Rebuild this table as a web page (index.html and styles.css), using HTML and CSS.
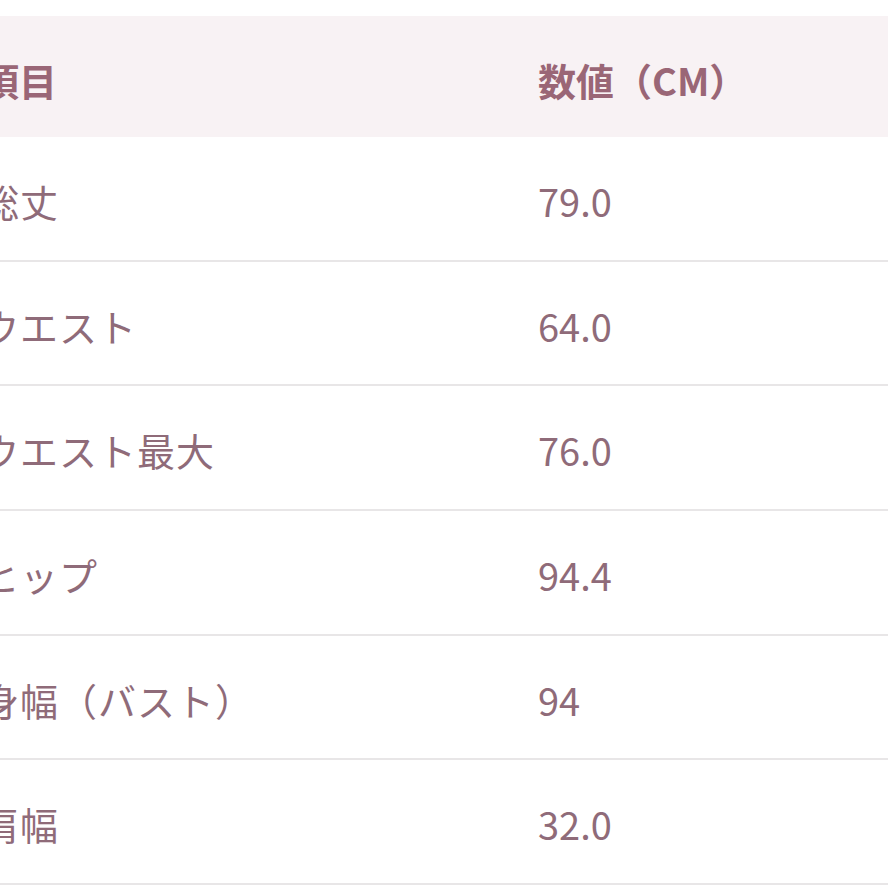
FILE: index.html
```html
<!DOCTYPE html>
<html lang="ja">
<head>
<meta charset="utf-8">
<link rel="stylesheet" href="styles.css">
</head>
<body>
<div class="sheet">
  <div class="row head">
    <div class="cell name">項目</div>
    <div class="cell val">数値（CM）</div>
  </div>
  <div class="row"><div class="cell name">総丈</div><div class="cell val">79.0</div></div>
  <div class="row"><div class="cell name">ウエスト</div><div class="cell val">64.0</div></div>
  <div class="row"><div class="cell name">ウエスト最大</div><div class="cell val">76.0</div></div>
  <div class="row"><div class="cell name">ヒップ</div><div class="cell val">94.4</div></div>
  <div class="row"><div class="cell name">身幅（バスト）</div><div class="cell val">94</div></div>
  <div class="row"><div class="cell name">肩幅</div><div class="cell val">32.0</div></div>
</div>
</body>
</html>
```
FILE: styles.css
```css
html, body {
  margin: 0;
  padding: 0;
  background: #ffffff;
  overflow: hidden;
}
body {
  padding-top: 16px;
  font-family: "Noto Sans CJK JP", "Noto Sans", sans-serif;
  color: #8f6b79;
}
.sheet {
  margin-left: -40px;
  width: 960px;
}
.row {
  display: flex;
  align-items: center;
  box-sizing: border-box;
  height: 124.7px;
  border-bottom: 2px solid #e8e6e7;
  padding-top: 5px;
}
.row.head {
  height: 121px;
  background: #f8f2f4;
  border-bottom: none;
  color: #9a6676;
  font-weight: 700;
  padding-top: 6px;
}
.cell {
  font-size: 38px;
  line-height: 1;
  white-space: nowrap;
}
.name {
  width: 578px;
  padding-left: 21px;
  box-sizing: border-box;
  letter-spacing: 1px;
}
.head .name {
  letter-spacing: 0;
}
.val {
  flex: 1;
}
```
